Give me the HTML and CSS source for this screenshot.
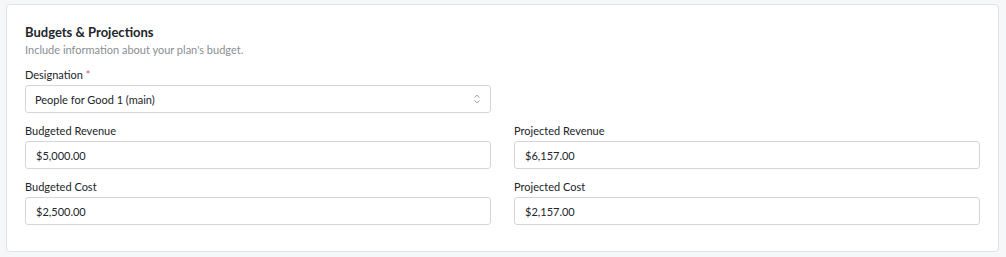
FILE: index.html
```html
<!DOCTYPE html>
<html lang="en">
<head>
  <meta charset="UTF-8" />
  <title>Budgets &amp; Projections</title>
  <link rel="stylesheet" href="styles.css">
</head>
<body>

<div class="card">
  <h2 class="card-title">Budgets &amp; Projections</h2>
  <p class="card-sub">Include information about your plan's budget.</p>

  <div class="field">
    <label class="field-label">Designation <span class="req">*</span></label>
    <div class="select-box">
      <span>People for Good 1 (main)</span>
      <svg class="chev" width="8" height="10" viewBox="0 0 8 10"><path d="M1.5 3.5 L4 1.2 L6.5 3.5 M1.5 6.5 L4 8.8 L6.5 6.5" fill="none" stroke="#9aa0a6" stroke-width="1"/></svg>
    </div>
  </div>

  <div class="grid">
    <div class="field">
      <label class="field-label">Budgeted Revenue</label>
      <div class="input-box">$5,000.00</div>
    </div>
    <div class="field">
      <label class="field-label">Projected Revenue</label>
      <div class="input-box">$6,157.00</div>
    </div>
    <div class="field">
      <label class="field-label">Budgeted Cost</label>
      <div class="input-box">$2,500.00</div>
    </div>
    <div class="field">
      <label class="field-label">Projected Cost</label>
      <div class="input-box">$2,157.00</div>
    </div>
  </div>
</div>

</body>
</html>
```

FILE: styles.css
```css
body { margin: 0; padding: 4px 7px 0 6px; background: #f6f7f8; font-family: Lato, "Noto Sans", sans-serif; color: #212529; }
.card { background: white; border: 1px solid #e0e2e5; border-radius: 4px; padding: 18px 18px 26px 18px; }
.card-title { margin: 0; font-size: 13px; line-height: 19px; font-weight: bold; }
.card-sub { margin: 0 0 9px; font-size: 11px; line-height: 16px; color: #8a8e93; }
.field-label { display: block; font-size: 11px; line-height: 16px; margin-bottom: 2px; }
.req { color: #e05a55; }
.select-box, .input-box {
  box-sizing: border-box;
  height: 28px;
  border: 1px solid #d2d6da;
  border-radius: 3px;
  font-size: 11px;
  display: flex;
  align-items: center;
}
.select-box { width: 466px; padding: 0 9px; justify-content: space-between; }
.input-box { padding: 0 10px; }
.grid { display: grid; grid-template-columns: 1fr 1fr; column-gap: 23px; }
.grid .field { margin-top: 10px; }
```
